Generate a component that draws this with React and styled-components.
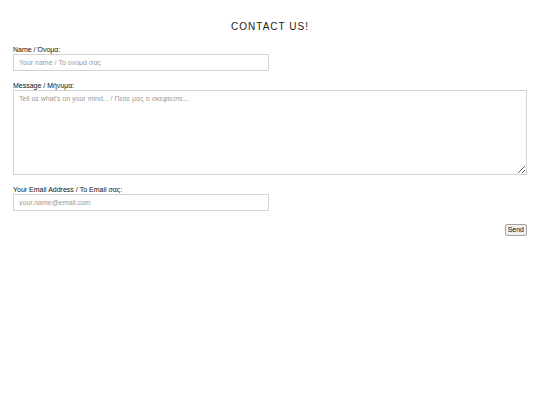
import styled, { createGlobalStyle } from "styled-components";

const GlobalStyle = createGlobalStyle`
  html, body {
    margin: 0;
    padding: 0;
    background: #ffffff;
  }
  body {
    font-family: "Liberation Sans", Arial, sans-serif;
    color: #111;
  }
`;

const Page = styled.div`
  padding: 21px 13px;
  display: flex;
  flex-direction: column;
`;

const Title = styled.h1`
  margin: 0 0 13px 0;
  font-size: 10px;
  line-height: 12px;
  font-weight: normal;
  letter-spacing: 1px;
  text-align: center;
  color: #222;
`;

const Form = styled.form`
  display: flex;
  flex-direction: column;
  gap: 11px;
`;

const Field = styled.div`
  display: flex;
  flex-direction: column;
`;

const Label = styled.label`
  font-size: 7px;
  line-height: 8px;
  color: #111;
`;

const TextInput = styled.input`
  box-sizing: border-box;
  width: ${(p) => p.$width || "256px"};
  height: 17px;
  margin: 0;
  padding: 0 5px;
  border: 1px solid #d4d4d4;
  font-family: "Liberation Sans", Arial, sans-serif;
  font-size: 7px;
  outline: none;
  &::placeholder {
    color: #9a9a9a;
  }
`;

const TextArea = styled.textarea`
  box-sizing: border-box;
  width: 100%;
  height: 85px;
  margin: 0;
  padding: 4px 5px;
  border: 1px solid #d4d4d4;
  font-family: "Liberation Sans", Arial, sans-serif;
  font-size: 7px;
  outline: none;
  &::placeholder {
    color: #9a9a9a;
  }
`;

const Actions = styled.div`
  display: flex;
  justify-content: flex-end;
  margin-top: 2px;
`;

const SendButton = styled.button`
  font-family: "Liberation Sans", Arial, sans-serif;
  font-size: 7px;
  line-height: 8px;
  padding: 1px 2px;
  background: #efefef;
  border: 1px solid #a3a3a3;
  border-radius: 2px;
  color: #111;
`;

export default function App() {
  const handleSubmit = (e) => {
    e.preventDefault();
  };

  return (
    <>
      <GlobalStyle />
      <Page>
        <Title>CONTACT US!</Title>
        <Form onSubmit={handleSubmit}>
          <Field>
            <Label htmlFor="name">Name / Όνομα:</Label>
            <TextInput id="name" type="text" placeholder="Your name / Το ονομά σας" />
          </Field>
          <Field>
            <Label htmlFor="message">Message / Μήνυμα:</Label>
            <TextArea
              id="message"
              placeholder="Tell us what's on your mind... / Πείτε μας τι σκέφτεστε..."
            />
          </Field>
          <Field>
            <Label htmlFor="email">Your Email Address / Το Email σας:</Label>
            <TextInput id="email" type="email" placeholder="your.name@email.com" />
          </Field>
          <Actions>
            <SendButton type="submit">Send</SendButton>
          </Actions>
        </Form>
      </Page>
    </>
  );
}
